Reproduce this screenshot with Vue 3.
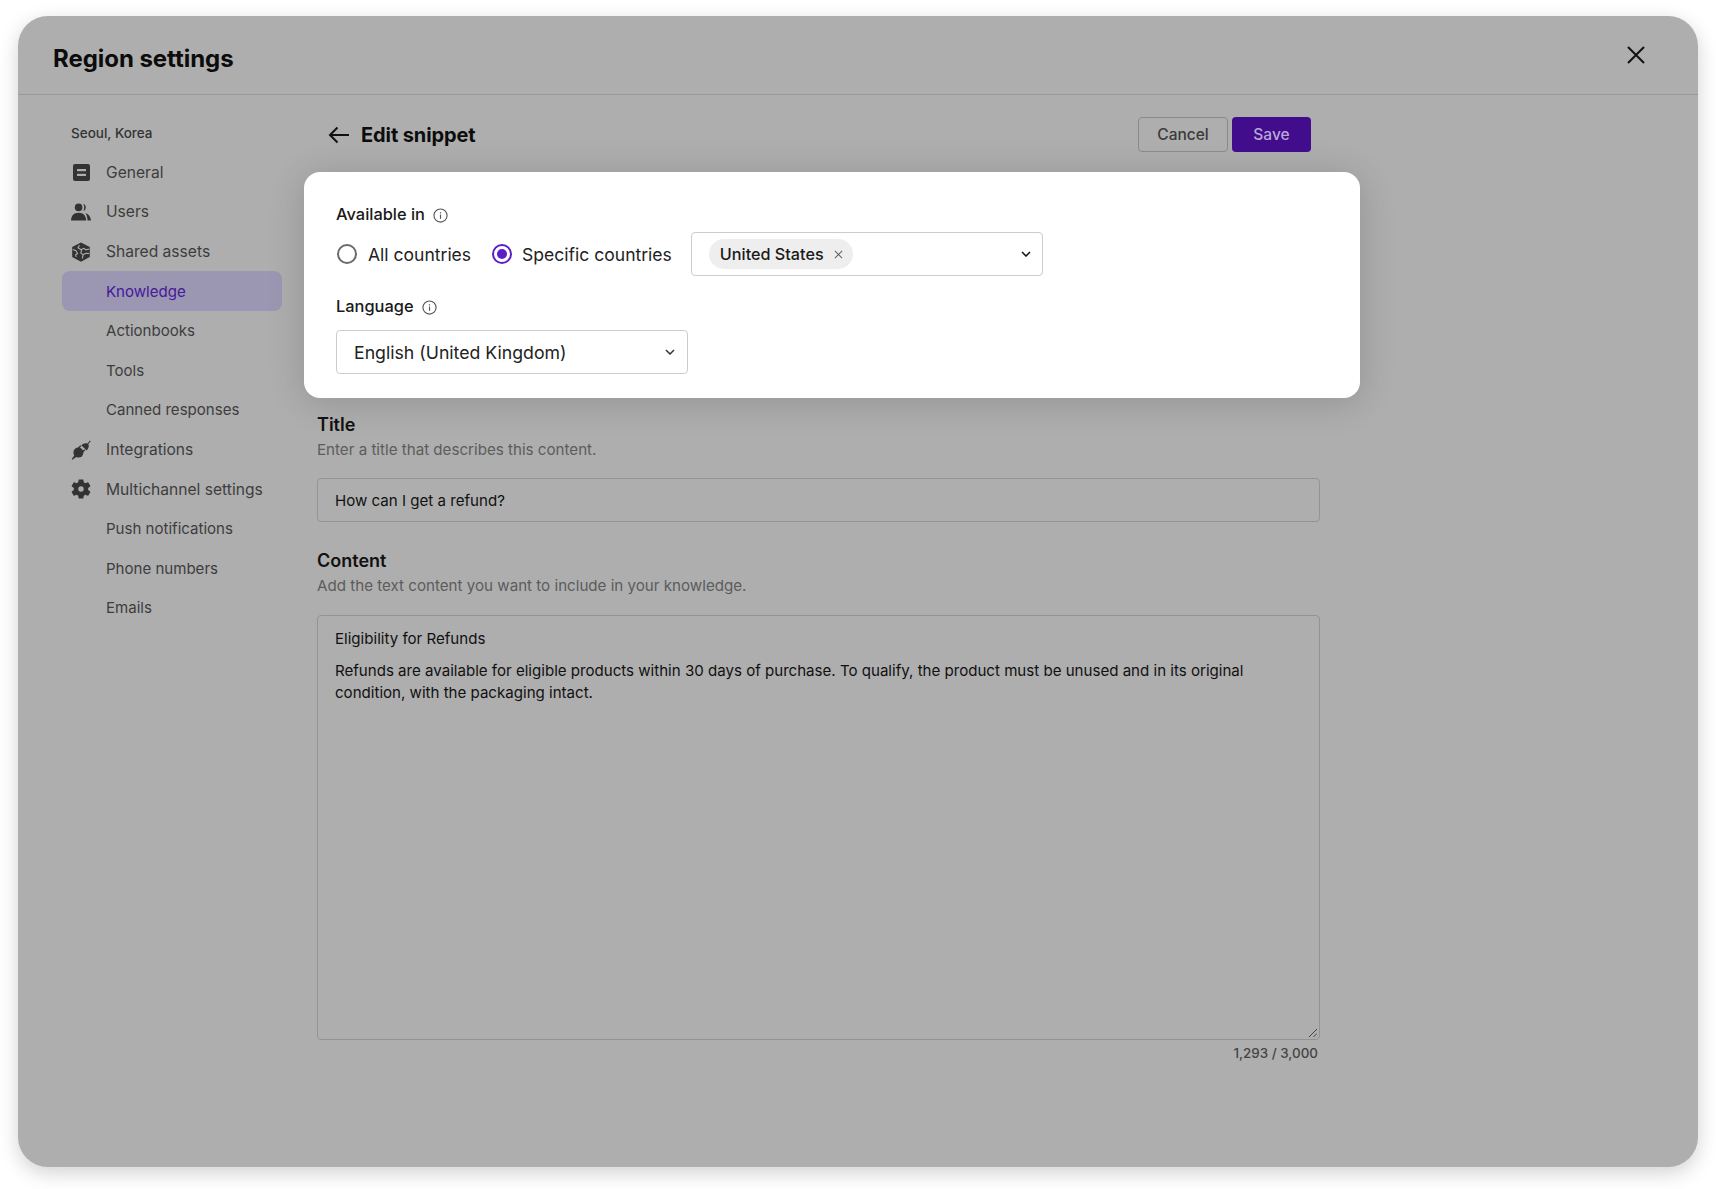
<script setup>
const nav = [
  { label: 'General', icon: 'general' },
  { label: 'Users', icon: 'users' },
  { label: 'Shared assets', icon: 'shared' },
  { label: 'Knowledge', active: true },
  { label: 'Actionbooks' },
  { label: 'Tools' },
  { label: 'Canned responses' },
  { label: 'Integrations', icon: 'plug' },
  { label: 'Multichannel settings', icon: 'gear' },
  { label: 'Push notifications' },
  { label: 'Phone numbers' },
  { label: 'Emails' }
]
</script>

<template>
  <div class="page">
    <div class="modal">
      <header class="modal-head">
        <h1>Region settings</h1>
        <svg class="close" viewBox="0 0 18 18" width="18" height="18"><path d="M1 1l16 16M17 1L1 17" fill="none" stroke="#111" stroke-width="2"/></svg>
      </header>
      <div class="modal-body">
        <aside class="side">
          <div class="region">Seoul, Korea</div>
          <div v-for="item in nav" :key="item.label" class="item" :class="{ active: item.active, child: !item.icon }">
            <span class="ico">
              <svg v-if="item.icon === 'general'" viewBox="0 0 20 20" width="20" height="20"><rect x="2" y="2" width="17" height="17" rx="2" fill="#333"/><rect x="6" y="7" width="9" height="2.200" fill="#aeaeae"/><rect x="6" y="11.800" width="9" height="2.200" fill="#aeaeae"/></svg>
              <svg v-else-if="item.icon === 'users'" viewBox="0 0 20 20" width="20" height="20"><circle cx="7.600" cy="5.400" r="3.800" fill="#333"/><path d="M0 18.500c.2-5 3-7.700 7.600-7.700s7.400 2.700 7.600 7.700z" fill="#333"/><path d="M12.200 1.700a3.900 3.900 0 0 1 0 7.400c1.400-2.100 1.400-5.300 0-7.400zM14.400 11c3 .8 5.200 3.400 5.600 7.500h-3.400c-.2-3.100-.9-5.500-2.200-7.500z" fill="#333"/></svg>
              <svg v-else-if="item.icon === 'shared'" viewBox="0 0 20 20" width="20" height="20"><path d="M10 .4l8.800 4.700v9.800L10 19.800l-8.800-4.900V5.100z" fill="#333"/><path d="M1.800 7.500l3.200 1.200 1.500 2.800-1.800 1.200.5 2.200M8.500 3.200L7 5.800l3 1.800 3.200-1.300 1.500 1.500 3.500-.8M10.500 7.800l-.6 3.300 2.200 1.600-.8 3.800M12.100 12.700l2.700-1.400 3.400.2" fill="none" stroke="#aeaeae" stroke-width="1.100"/></svg>
              <svg v-else-if="item.icon === 'plug'" viewBox="0 0 20 20" width="20" height="20"><circle cx="7.400" cy="12.600" r="5" fill="#333"/><path d="M4 14.500l-3.300 4.600.7.700 4.600-3.300z" fill="#333"/><path d="M7.500 8l2.300-2.300M11.500 12l2.300-2.300" stroke="#333" stroke-width="1.400"/><path d="M10.300 5.200c1.800-2 4.400-2.500 6.300-1.700l2.300-3 .8.700-2.400 2.900c1 1.900.4 4.500-1.600 6.300z" fill="#333"/></svg>
              <svg v-else-if="item.icon === 'gear'" viewBox="2 2 20 20" width="20" height="20"><path fill="#333" d="M19.140 12.940c.04-.3.06-.61.06-.94 0-.32-.02-.64-.07-.94l2.030-1.580c.18-.14.23-.41.12-.61l-1.920-3.320c-.12-.22-.37-.29-.59-.22l-2.390.96c-.5-.38-1.030-.7-1.620-.94l-.36-2.540c-.04-.24-.24-.41-.48-.41h-3.840c-.24 0-.43.17-.47.41l-.36 2.540c-.59.24-1.130.57-1.620.94l-2.390-.96c-.22-.08-.47 0-.59.22L2.740 8.870c-.12.21-.08.47.12.61l2.030 1.580c-.05.3-.09.63-.09.94s.02.64.07.94l-2.030 1.580c-.18.14-.23.41-.12.61l1.920 3.320c.12.22.37.29.59.22l2.390-.96c.5.38 1.030.7 1.620.94l.36 2.540c.05.24.24.41.48.41h3.840c.24 0 .44-.17.47-.41l.36-2.540c.59-.24 1.130-.56 1.620-.94l2.390.96c.22.08.47 0 .59-.22l1.920-3.320c.12-.22.07-.47-.12-.61l-2.010-1.580zM12 14.700a2.700 2.700 0 1 1 0-5.400 2.700 2.700 0 0 1 0 5.400z"/></svg>
            </span>
            <span>{{ item.label }}</span>
          </div>
        </aside>

        <main class="main">
          <div class="top">
            <svg class="back" viewBox="0 0 22 18" width="22" height="18"><path d="M21 9H2M9.500 1.500L2 9l7.500 7.500" fill="none" stroke="#111" stroke-width="2"/></svg>
            <h2>Edit snippet</h2>
            <button class="btn cancel">Cancel</button>
            <button class="btn save">Save</button>
          </div>

          <section class="card">
            <div class="label">Available in
              <svg class="info" viewBox="0 0 16 16" width="15" height="15"><circle cx="8" cy="8" r="7" fill="none" stroke="#555" stroke-width="1.200"/><rect x="7.400" y="7" width="1.200" height="4.500" fill="#555"/><rect x="7.400" y="4.500" width="1.200" height="1.300" fill="#555"/></svg>
            </div>
            <div class="radios">
              <span class="radio"></span>
              <span class="opt first">All countries</span>
              <span class="radio on"></span>
              <span class="opt">Specific countries</span>
              <div class="select multi">
                <span class="chip">United States
                  <svg viewBox="0 0 10 10" width="9" height="9"><path d="M1 1l8 8M9 1L1 9" fill="none" stroke="#666" stroke-width="1.200"/></svg>
                </span>
                <svg class="chev" viewBox="0 0 10 6" width="10" height="6"><path d="M1 1l4 4 4-4" fill="none" stroke="#111" stroke-width="1.500"/></svg>
              </div>
            </div>
            <div class="label lang">Language
              <svg class="info" viewBox="0 0 16 16" width="15" height="15"><circle cx="8" cy="8" r="7" fill="none" stroke="#555" stroke-width="1.200"/><rect x="7.400" y="7" width="1.200" height="4.500" fill="#555"/><rect x="7.400" y="4.500" width="1.200" height="1.300" fill="#555"/></svg>
            </div>
            <div class="select single">
              <span>English (United Kingdom)</span>
              <svg class="chev" viewBox="0 0 10 6" width="10" height="6"><path d="M1 1l4 4 4-4" fill="none" stroke="#333" stroke-width="1.500"/></svg>
            </div>
          </section>

          <div class="field-title">Title</div>
          <div class="field-desc">Enter a title that describes this content.</div>
          <div class="input">How can I get a refund?</div>

          <div class="field-title second">Content</div>
          <div class="field-desc">Add the text content you want to include in your knowledge.</div>
          <div class="area">
            <p>Eligibility for Refunds</p>
            <p>Refunds are available for eligible products within 30 days of purchase. To qualify, the product must be unused and in its original condition, with the packaging intact.</p>
            <svg class="grip" viewBox="0 0 8 8" width="8" height="8"><path d="M0 8l8-8M4.500 8L8 4.500" stroke="#444" stroke-width="1" fill="none"/></svg>
          </div>
          <div class="count">1,293 / 3,000</div>
        </main>
      </div>
    </div>
  </div>
</template>

<style scoped>
.page {
  width: 1716px;
  height: 1189px;
  padding: 16px 18px 21px;
  box-sizing: border-box;
  background: #fff;
  font-family: Inter, "Liberation Sans", sans-serif;
  overflow: hidden;
}
.modal {
  height: 1151px;
  background: #aeaeae;
  border-radius: 30px;
  box-shadow: 0 6px 20px rgba(0, 0, 0, 0.18);
}
.modal-head {
  height: 79px;
  box-sizing: border-box;
  border-bottom: 1px solid #9a9a9a;
  display: flex;
  justify-content: space-between;
  padding: 0 53px 0 35px;
}
.modal-head h1 {
  margin: 29px 0 0;
  font-size: 24px;
  line-height: 28px;
  font-weight: 700;
  letter-spacing: -0.05px;
  color: #0c0c0c;
}
.close { margin-top: 30px; }
.modal-body { display: flex; }
.side {
  width: 299px;
  box-sizing: border-box;
  padding: 19px 0 0 44px;
  flex: none;
}
.region {
  height: 38.6px;
  line-height: 38.6px;
  padding-left: 9px;
  font-size: 13.5px;
  font-weight: 500;
  color: #333;
}
.item {
  width: 220px;
  height: 39.6px;
  box-sizing: border-box;
  padding-left: 9px;
  display: flex;
  align-items: center;
  gap: 15px;
  font-size: 15.6px;
  color: #3d3d3d;
  border-radius: 8px;
}
.item.child { font-size: 15.05px; }
.item.active {
  background: #9b96b2;
  color: #46189a;
}
.ico { width: 20px; height: 20px; flex: none; }
.ico svg { display: block; }
.main { width: 1003px; }
.top {
  display: flex;
  align-items: center;
  padding-top: 22px;
  height: 35px;
  position: relative;
}
.back { margin: 0 11px 0 11px; }
.top h2 {
  margin: 0;
  font-size: 20px;
  font-weight: 700;
  letter-spacing: -0.1px;
  color: #0c0c0c;
  flex: 1;
}
.btn {
  height: 35px;
  border-radius: 4px;
  font: 500 15.5px Inter, "Liberation Sans", sans-serif;
  padding: 0;
}
.cancel {
  width: 90px;
  background: transparent;
  border: 1px solid #8a8a8a;
  color: #3a3a3a;
  margin-right: 4px;
}
.save {
  width: 79px;
  background: #420d8c;
  border: 0;
  color: #b9a8d6;
  margin-right: 9px;
}
.card {
  margin: 20px -40px 0 -13px;
  height: 226px;
  box-sizing: border-box;
  padding: 31px 32px 0;
  background: #fff;
  border-radius: 16px;
  box-shadow: 0 4px 36px rgba(0, 0, 0, 0.16);
}
.label {
  display: flex;
  align-items: center;
  gap: 8px;
  height: 22px;
  font-size: 16.4px;
  font-weight: 500;
  color: #1a1a1a;
}
.info { margin-top: 2px; }
.radios {
  display: flex;
  align-items: center;
  height: 44px;
  margin-top: 7px;
  padding-left: 1px;
}
.radio {
  width: 20px;
  height: 20px;
  box-sizing: border-box;
  border: 2px solid #6a6a6a;
  border-radius: 50%;
  flex: none;
}
.radio.on {
  border-color: #5d1ec4;
  position: relative;
}
.radio.on::after {
  content: "";
  position: absolute;
  inset: 3px;
  border-radius: 50%;
  background: #5d1ec4;
}
.opt {
  font-size: 17.55px;
  color: #222;
  margin-left: 10px;
  margin-right: 19px;
}
.opt.first { margin-left: 11px; margin-right: 21px; }
.select {
  box-sizing: border-box;
  height: 44px;
  border: 1px solid #ccc;
  border-radius: 4px;
  display: flex;
  align-items: center;
  justify-content: space-between;
}
.multi {
  width: 352px;
  padding: 0 11px 0 17px;
}
.chip {
  height: 30px;
  width: 144px;
  box-sizing: border-box;
  padding: 0 0 0 11px;
  display: flex;
  align-items: center;
  gap: 10px;
  background: #eee;
  border-radius: 15px;
  font-size: 16.2px;
  font-weight: 500;
  color: #1a1a1a;
}
.lang { margin-top: 19px; }
.single {
  width: 352px;
  margin-top: 13px;
  padding: 0 12px 0 17px;
  font-size: 17.7px;
  color: #222;
}
.field-title {
  margin-top: 15px;
  height: 24px;
  line-height: 24px;
  font-size: 18px;
  font-weight: 600;
  color: #111;
}
.field-title.second { margin-top: 27px; }
.field-desc {
  margin-top: 2px;
  height: 22px;
  line-height: 22px;
  font-size: 15.15px;
  color: #5c5c5c;
}
.input {
  margin-top: 17px;
  height: 44px;
  line-height: 43px;
  box-sizing: border-box;
  border: 1px solid #939393;
  border-radius: 4px;
  padding: 0 17px;
  font-size: 15.1px;
  color: #111;
}
.area {
  position: relative;
  margin-top: 18px;
  height: 425px;
  box-sizing: border-box;
  border: 1px solid #939393;
  border-radius: 4px;
  padding: 12px 17px 0;
  font-size: 15.08px;
  line-height: 22px;
  color: #111;
}
.area p { margin: 0 0 10px; }
.grip {
  position: absolute;
  right: 2px;
  bottom: 2px;
}
.count {
  margin-top: 4px;
  padding-right: 2px;
  text-align: right;
  font-size: 13.4px;
  font-weight: 500;
  line-height: 18px;
  color: #444;
}
</style>
